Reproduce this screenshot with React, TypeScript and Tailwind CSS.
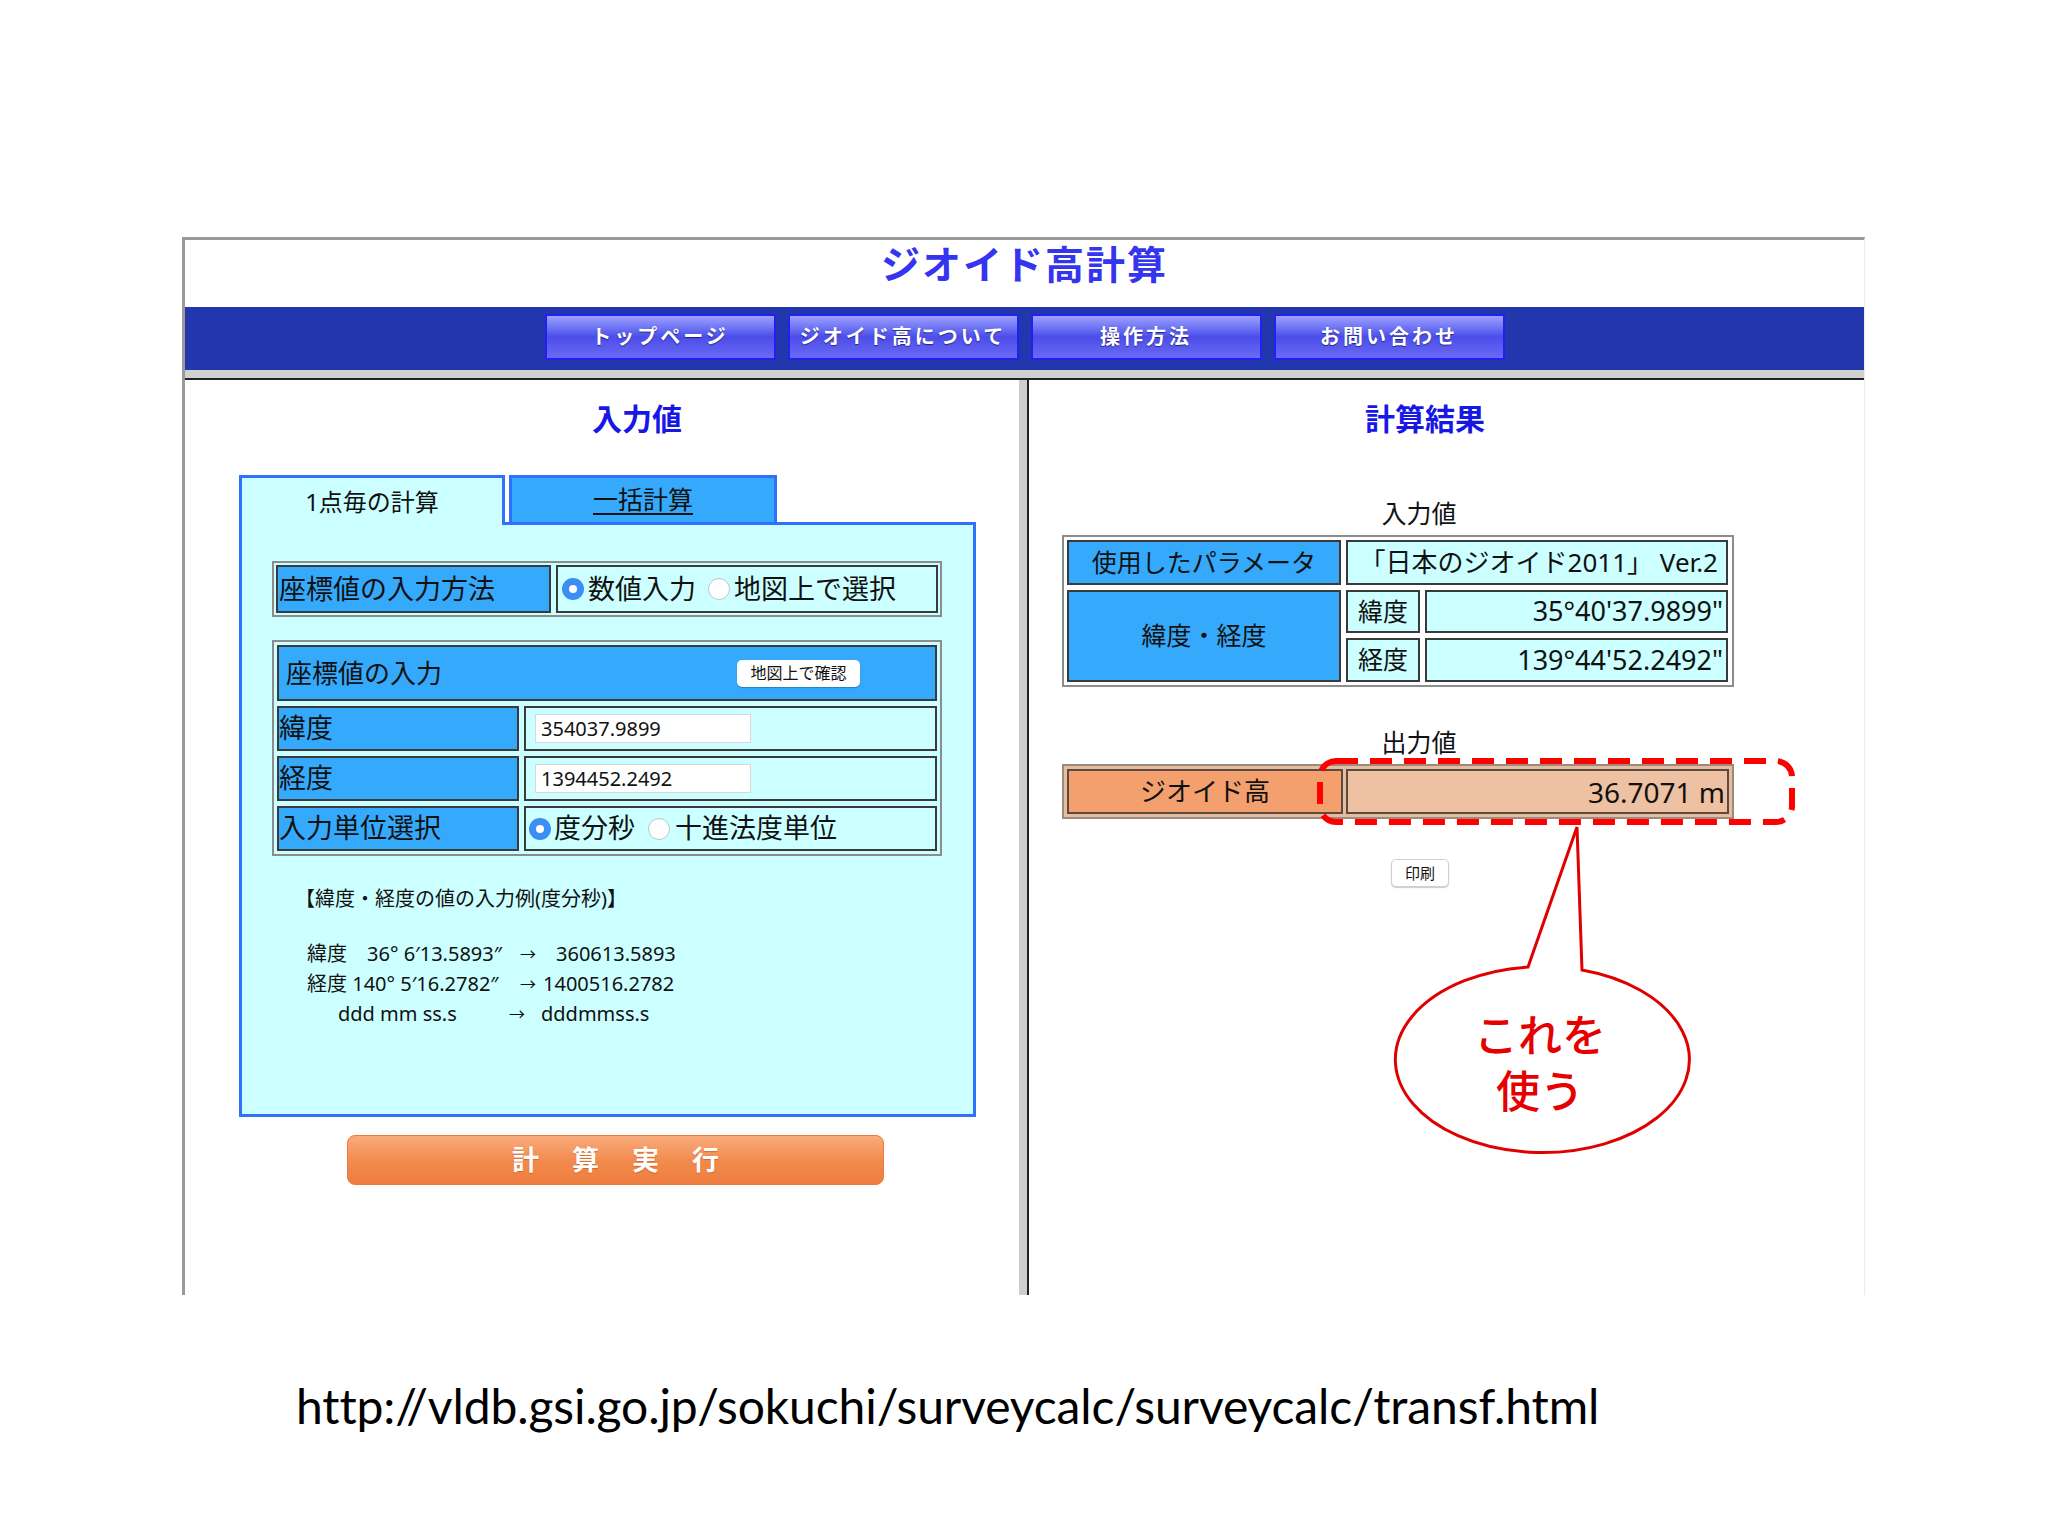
import React from 'react';

const jp = "font-['Noto_Sans','Noto_Sans_CJK_JP',sans-serif]";

function Radio({ on }: { on?: boolean }) {
    return on ? (
        <span className="w-[22px] h-[22px] rounded-full bg-[#3d8ef3] flex items-center justify-center shrink-0">
            <span className="block w-[8px] h-[8px] rounded-full bg-white"></span>
        </span>
    ) : (
        <span className="block w-[22px] h-[22px] rounded-full bg-white border border-[#c4c4c4] shrink-0"></span>
    );
}

const cellBlue = 'bg-[#35a9fb] border-2 border-[#3a3a3a]';
const cellCyan = 'bg-[#ccffff] border-2 border-[#3a3a3a]';

function NavButton({ label }: { label: string }) {
    return (
        <div className="w-[231px] h-[46px] border-2 border-[#2020f0] bg-linear-to-b from-[#a0a0ff] via-[#4c4cea] to-[#6a6af4] flex items-center justify-center text-white font-bold text-[20px] tracking-[3px] [text-shadow:0_1px_1px_rgba(0,0,60,0.6)]">
            {label}
        </div>
    );
}

export default function App() {
    return (
        <div className={`relative w-[2048px] h-[1536px] bg-white overflow-hidden ${jp} text-[#111]`}>
            <div className="h-[237px]"></div>
            {/* 画面キャプチャ枠 */}
            <div className="ml-[182px] w-[1683px] h-[1058px] border-l-[3px] border-t-[3px] border-[#9a9a9a] border-r border-r-[#ececec] flex flex-col">
                <div className="h-[67px] flex justify-center">
                    <h1 className="text-[39px] leading-[48px] font-bold tracking-[2px] text-[#3535f0]">ジオイド高計算</h1>
                </div>
                <div className="h-[63px] bg-[#2236ae] flex justify-center items-start pt-[7px] gap-[12px]">
                    <NavButton label="トップページ" />
                    <NavButton label="ジオイド高について" />
                    <NavButton label="操作方法" />
                    <NavButton label="お問い合わせ" />
                </div>
                <div className="h-[10px] bg-[#d0d0d0] border-b-2 border-[#222]"></div>

                <div className="flex flex-1">
                    {/* 入力値 */}
                    <div className="w-[834px] flex flex-col">
                        <div className="h-[95px] pt-[24px] pl-[407px]">
                            <h2 className="text-[30px] leading-[30px] font-bold text-[#1717e6]">入力値</h2>
                        </div>
                        <div className="ml-[54px] w-[737px]">
                            <div className="flex h-[50px]">
                                <div className="w-[266px] border-l-[3px] border-t-[3px] border-r-[3px] border-[#3070ff] bg-[#ccffff] flex items-center justify-center text-[24px]">
                                    1点毎の計算
                                </div>
                                <div className="w-[4px] border-b-[3px] border-[#3070ff]"></div>
                                <div className="w-[268px] border-[3px] border-[#3070ff] bg-[#35a9fb] flex items-center justify-center text-[25px] underline underline-offset-4">
                                    一括計算
                                </div>
                                <div className="flex-1 border-b-[3px] border-[#3070ff] bg-white"></div>
                            </div>
                            <div className="h-[592px] border-l-[3px] border-r-[3px] border-b-[3px] border-[#3070ff] bg-[#ccffff] pl-[30px] pt-[36px]">
                                <div className="w-[670px] h-[56px] border-2 border-[#8c8c8c] p-[2px] flex gap-[5px]">
                                    <div className={`${cellBlue} w-[275px] flex items-center pl-[1px] text-[27px]`}>座標値の入力方法</div>
                                    <div className={`${cellCyan} flex-1 flex items-center pl-[4px] text-[27px]`}>
                                        <Radio on />
                                        <span className="ml-[4px]">数値入力</span>
                                        <span className="ml-[12px]"><Radio /></span>
                                        <span className="ml-[4px]">地図上で選択</span>
                                    </div>
                                </div>

                                <div className="mt-[23px] w-[670px] border-2 border-[#8c8c8c] p-[3px] flex flex-col gap-[5px]">
                                    <div className={`${cellBlue} h-[56px] flex items-center justify-between pl-[7px] pr-[75px] text-[26px]`}>
                                        <span>座標値の入力</span>
                                        <span className="w-[123px] h-[27px] bg-white rounded-[5px] shadow-[0_1px_1px_rgba(0,0,0,0.25)] text-[16px] flex items-center justify-center">地図上で確認</span>
                                    </div>
                                    <div className="flex gap-[5px] h-[45px]">
                                        <div className={`${cellBlue} w-[242px] flex items-center text-[27px]`}>緯度</div>
                                        <div className={`${cellCyan} flex-1 flex items-center pl-[9px]`}>
                                            <span className="w-[216px] h-[29px] bg-white border border-[#d8d8d8] flex items-center pl-[5px] text-[20px]">354037.9899</span>
                                        </div>
                                    </div>
                                    <div className="flex gap-[5px] h-[45px]">
                                        <div className={`${cellBlue} w-[242px] flex items-center text-[27px]`}>経度</div>
                                        <div className={`${cellCyan} flex-1 flex items-center pl-[9px]`}>
                                            <span className="w-[216px] h-[29px] bg-white border border-[#d8d8d8] flex items-center pl-[5px] text-[20px]">1394452.2492</span>
                                        </div>
                                    </div>
                                    <div className="flex gap-[5px] h-[45px]">
                                        <div className={`${cellBlue} w-[242px] flex items-center text-[27px]`}>入力単位選択</div>
                                        <div className={`${cellCyan} flex-1 flex items-center pl-[3px] text-[27px]`}>
                                            <Radio on />
                                            <span className="ml-[3px]">度分秒</span>
                                            <span className="ml-[13px]"><Radio /></span>
                                            <span className="ml-[5px]">十進法度単位</span>
                                        </div>
                                    </div>
                                </div>

                                <div className="mt-[28px] ml-[23px] text-[20px] leading-[30px]">【緯度・経度の値の入力例(度分秒)】</div>
                                <div className="mt-[25px] ml-[35px] text-[20px] leading-[30px]">
                                    <div className="flex">
                                        <span className="w-[213px] whitespace-pre">緯度　36° 6′13.5893″</span>
                                        <span className="w-[36px] text-[16px]">→</span>
                                        <span>360613.5893</span>
                                    </div>
                                    <div className="flex">
                                        <span className="w-[213px] whitespace-pre">経度 140° 5′16.2782″</span>
                                        <span className="w-[23px] text-[16px]">→</span>
                                        <span>1400516.2782</span>
                                    </div>
                                    <div className="flex">
                                        <span className="w-[202px] pl-[31px]">ddd mm ss.s</span>
                                        <span className="w-[32px] text-[16px]">→</span>
                                        <span>dddmmss.s</span>
                                    </div>
                                </div>
                            </div>
                        </div>
                        <div className="mt-[18px] ml-[162px] w-[537px] h-[50px] rounded-[8px] border border-[#ea7a40] bg-linear-to-b from-[#f9ab7c] via-[#f28c4e] to-[#ee7c3e] flex items-center justify-center text-white font-bold text-[27px] tracking-[33px] pl-[33px] [text-shadow:0_1px_1px_rgba(150,60,0,0.4)]">
                            計算実行
                        </div>
                    </div>

                    <div className="w-[8px] bg-[#cfcfcf]"></div>
                    <div className="w-[2px] bg-[#222]"></div>

                    {/* 計算結果 */}
                    <div className="flex-1 flex flex-col">
                        <div className="h-[95px] pt-[24px] pl-[336px]">
                            <h2 className="text-[30px] leading-[30px] font-bold text-[#1717e6]">計算結果</h2>
                        </div>
                        <div className="ml-[33px] w-[672px]">
                            <div className="mt-[23px] pl-[42px] text-center text-[25px] leading-[30px]">入力値</div>
                            <div className="mt-[7px] border-2 border-[#8c8c8c] p-[3px] grid grid-cols-[274px_74px_303px] grid-rows-[45px_43px_44px] gap-[5px] text-[25px] bg-white">
                                <div className={`${cellBlue} flex items-center justify-center`}>使用したパラメータ</div>
                                <div className={`${cellCyan} col-span-2 flex items-center justify-end pr-[8px] text-[26px]`}>「日本のジオイド2011」 Ver.2</div>
                                <div className={`${cellBlue} row-span-2 flex items-center justify-center`}>緯度・経度</div>
                                <div className={`${cellCyan} flex items-center justify-center`}>緯度</div>
                                <div className={`${cellCyan} flex items-center justify-end pr-[3px] text-[27px]`}>35°40'37.9899"</div>
                                <div className={`${cellCyan} flex items-center justify-center`}>経度</div>
                                <div className={`${cellCyan} flex items-center justify-end pr-[3px] text-[27px]`}>139°44'52.2492"</div>
                            </div>
                            <div className="mt-[40px] pl-[42px] text-center text-[25px] leading-[30px]">出力値</div>
                            <div className="mt-[7px] h-[55px] border-2 border-[#9a8a80] bg-[#e6bd9e] p-[3px] flex gap-[3px] text-[26px]">
                                <div className="w-[276px] bg-[#f4a06e] border-2 border-[#5a4a40] flex items-center justify-center">ジオイド高</div>
                                <div className="flex-1 bg-[#edc1a2] border-2 border-[#5a4a40] flex items-center justify-end pr-[2px] text-[28px]">36.7071 m</div>
                            </div>
                            <div className="mt-[40px] ml-[329px] w-[58px] h-[28px] rounded-[5px] border border-[#d0d0d0] bg-white shadow-[0_1px_1px_rgba(0,0,0,0.2)] flex items-center justify-center text-[15px]">
                                印刷
                            </div>
                        </div>
                    </div>
                </div>
            </div>

            <div className="mt-[81px] ml-[296px] font-['Lato',sans-serif] text-[48px] leading-[60px] tracking-[-0.1px] text-black">
                http://vldb.gsi.go.jp/sokuchi/surveycalc/surveycalc/transf.html
            </div>

            {/* 注釈（赤の破線枠と吹き出し） */}
            <svg className="absolute left-0 top-0 w-[2048px] h-[1536px] pointer-events-none" viewBox="0 0 2048 1536">
                <rect x="1320" y="761" width="472" height="61" rx="16" fill="none" stroke="#ff0000" strokeWidth="6" strokeDasharray="22 12" />
                <path d="M 1582 970 A 147 93 0 1 1 1528 967 L 1577 827 Z" fill="white" stroke="#e00000" strokeWidth="3" strokeLinejoin="miter" />
            </svg>
            <div className="absolute left-[1393px] top-[1005px] w-[294px] text-center text-[#e60000] text-[44px] leading-[56px] font-medium font-['Noto_Sans_CJK_JP',sans-serif]">
                <div>これを</div>
                <div>使う</div>
            </div>
        </div>
    );
}
